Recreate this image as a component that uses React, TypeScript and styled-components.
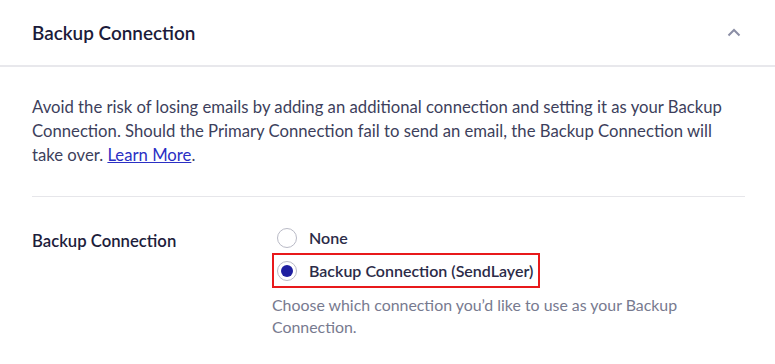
import React from "react";
import styled, { createGlobalStyle } from "styled-components";

const GlobalStyle = createGlobalStyle`
  html, body { margin: 0; padding: 0; background: #ffffff; }
  body { font-family: Lato, "Noto Sans", Arial, sans-serif; }
  * { box-sizing: border-box; }
`;

const Panel = styled.section`
  width: 775px;
  background: #ffffff;
`;

const Header = styled.header`
  height: 67px;
  padding: 0 32px;
  display: flex;
  align-items: center;
  justify-content: space-between;
  border-bottom: 2px solid #e8e8ec;
`;

const Title = styled.h2`
  margin: 0;
  font-size: 18.9px;
  font-weight: 600;
  color: #1b1b3a;
`;

const Toggle = styled.button`
  border: 0;
  background: none;
  padding: 0;
  margin-right: -3px;
  width: 24px;
  height: 24px;
  display: flex;
  align-items: center;
  justify-content: center;
  color: #8b8ea5;
  cursor: pointer;
`;

const Body = styled.div`
  padding: 28px 30px 0 32px;
`;

const Intro = styled.p`
  margin: 0;
  padding-bottom: 29px;
  font-size: 16.7px;
  line-height: 24px;
  color: #3d3f5c;
  border-bottom: 1px solid #e6e6ea;
`;

const Link = styled.a`
  color: #2b2fc4;
  text-decoration: underline;
`;

const Row = styled.div`
  display: grid;
  grid-template-columns: 240px 1fr;
  padding-top: 26px;
`;

const FieldLabel = styled.div`
  font-size: 16.7px;
  font-weight: 600;
  color: #1d1d3b;
  line-height: 34px;
  padding-top: 1px;
`;

const Options = styled.div`
  display: flex;
  flex-direction: column;
  align-items: flex-start;
  margin-top: -3px;
`;

const Option = styled.label<{ $highlight?: boolean }>`
  display: flex;
  align-items: center;
  gap: 12px;
  height: 35px;
  padding: 0 5px 0 3px;
  border: 2px solid ${(p) => (p.$highlight ? "#e8191b" : "transparent")};
  margin-top: ${(p) => (p.$highlight ? "-2px" : "0")};
  font-size: 16px;
  font-weight: 600;
  color: #2b2b48;
  cursor: pointer;
`;

const Radio = styled.span<{ $checked?: boolean }>`
  width: 20px;
  height: 20px;
  border-radius: 50%;
  border: 1px solid #b9bac6;
  background: #fff;
  display: flex;
  align-items: center;
  justify-content: center;
  &::after {
    content: "";
    width: 12px;
    height: 12px;
    border-radius: 50%;
    background: ${(p) => (p.$checked ? "#1f1fa0" : "transparent")};
  }
`;

const Help = styled.p`
  margin: 6px 0 0;
  max-width: 450px;
  font-size: 15.9px;
  line-height: 22px;
  color: #777a8f;
`;

export default function App() {
  return (
    <>
      <GlobalStyle />
      <Panel>
        <Header>
          <Title>Backup Connection</Title>
          <Toggle aria-label="Collapse">
            <svg width="14" height="9" viewBox="0 0 14 9" fill="none">
              <path d="M1.5 7.5L7 2l5.5 5.5" stroke="currentColor" strokeWidth="2" />
            </svg>
          </Toggle>
        </Header>
        <Body>
          <Intro>
            Avoid the risk of losing emails by adding an additional connection and setting it as your Backup
            Connection. Should the Primary Connection fail to send an email, the Backup Connection will
            take over. <Link href="#">Learn More</Link>.
          </Intro>
          <Row>
            <FieldLabel>Backup Connection</FieldLabel>
            <Options>
              <Option>
                <Radio />
                None
              </Option>
              <Option $highlight>
                <Radio $checked />
                Backup Connection (SendLayer)
              </Option>
              <Help>Choose which connection you’d like to use as your Backup Connection.</Help>
            </Options>
          </Row>
        </Body>
      </Panel>
    </>
  );
}
